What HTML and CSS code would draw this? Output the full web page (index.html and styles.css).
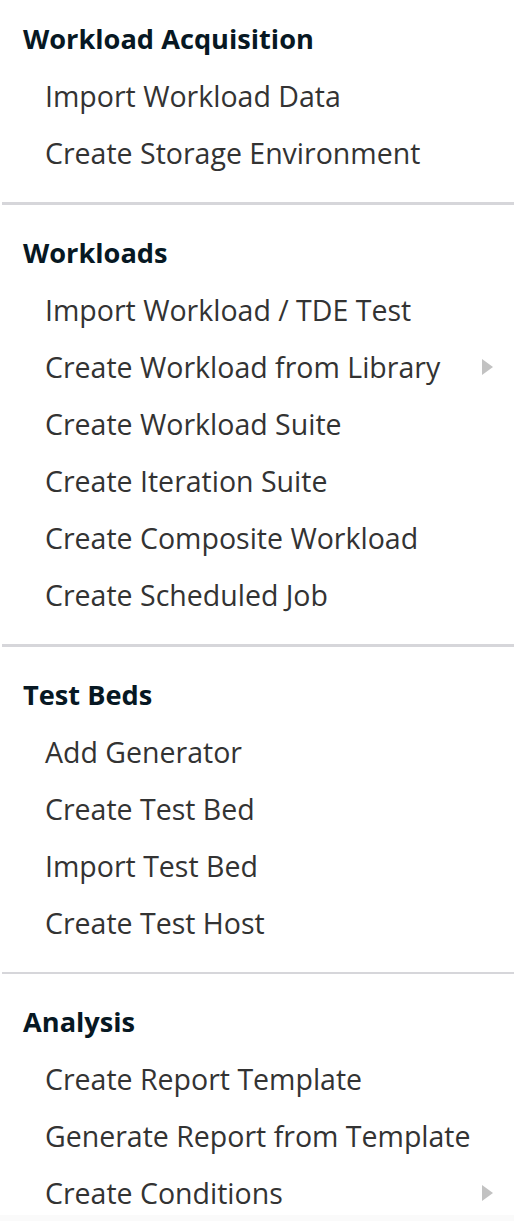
FILE: index.html
```html
<!DOCTYPE html>
<html>
<head>
<meta charset="utf-8">
<link rel="stylesheet" href="styles.css">
</head>
<body>
<nav class="menu">
  <section class="group">
    <div class="head">Workload Acquisition</div>
    <div class="item">Import Workload Data</div>
    <div class="item">Create Storage Environment</div>
  </section>
  <hr class="sep thick">
  <section class="group">
    <div class="head">Workloads</div>
    <div class="item">Import Workload / TDE Test</div>
    <div class="item sub">Create Workload from Library<span class="arrow"></span></div>
    <div class="item">Create Workload Suite</div>
    <div class="item">Create Iteration Suite</div>
    <div class="item">Create Composite Workload</div>
    <div class="item">Create Scheduled Job</div>
  </section>
  <hr class="sep thick">
  <section class="group">
    <div class="head">Test Beds</div>
    <div class="item">Add Generator</div>
    <div class="item">Create Test Bed</div>
    <div class="item">Import Test Bed</div>
    <div class="item">Create Test Host</div>
  </section>
  <hr class="sep">
  <section class="group">
    <div class="head">Analysis</div>
    <div class="item">Create Report Template</div>
    <div class="item">Generate Report from Template</div>
    <div class="item sub last">Create Conditions<span class="arrow"></span></div>
  </section>
</nav>
</body>
</html>
```
FILE: styles.css
```css
html, body {
  margin: 0;
  padding: 0;
  background: #ffffff;
}
.menu {
  width: 514px;
  height: 1232px;
  box-sizing: border-box;
  padding-top: 10px;
  font-family: "Open Sans", "Noto Sans", sans-serif;
  display: flex;
  flex-direction: column;
  overflow: hidden;
}
.group {
  display: flex;
  flex-direction: column;
}
.head {
  height: 57px;
  display: flex;
  align-items: center;
  padding-left: 23px;
  font-size: 27.2px;
  font-weight: 700;
  color: #071823;
}
.item {
  height: 57px;
  display: flex;
  align-items: center;
  padding-left: 45px;
  padding-right: 21px;
  font-size: 28.5px;
  color: #333333;
}
.item.sub {
  justify-content: space-between;
}
.item.last {
  background: linear-gradient(#ffffff 0, #ffffff 51px, #fafafa 51px);
}
.arrow {
  width: 0;
  height: 0;
  border-top: 8.5px solid transparent;
  border-bottom: 8.5px solid transparent;
  border-left: 11px solid #c2c2c2;
}
.sep {
  margin: 21px 0 19px 2px;
  border: 0;
  height: 2px;
  background: #d6d6da;
}
.sep.thick {
  height: 3px;
}
```
